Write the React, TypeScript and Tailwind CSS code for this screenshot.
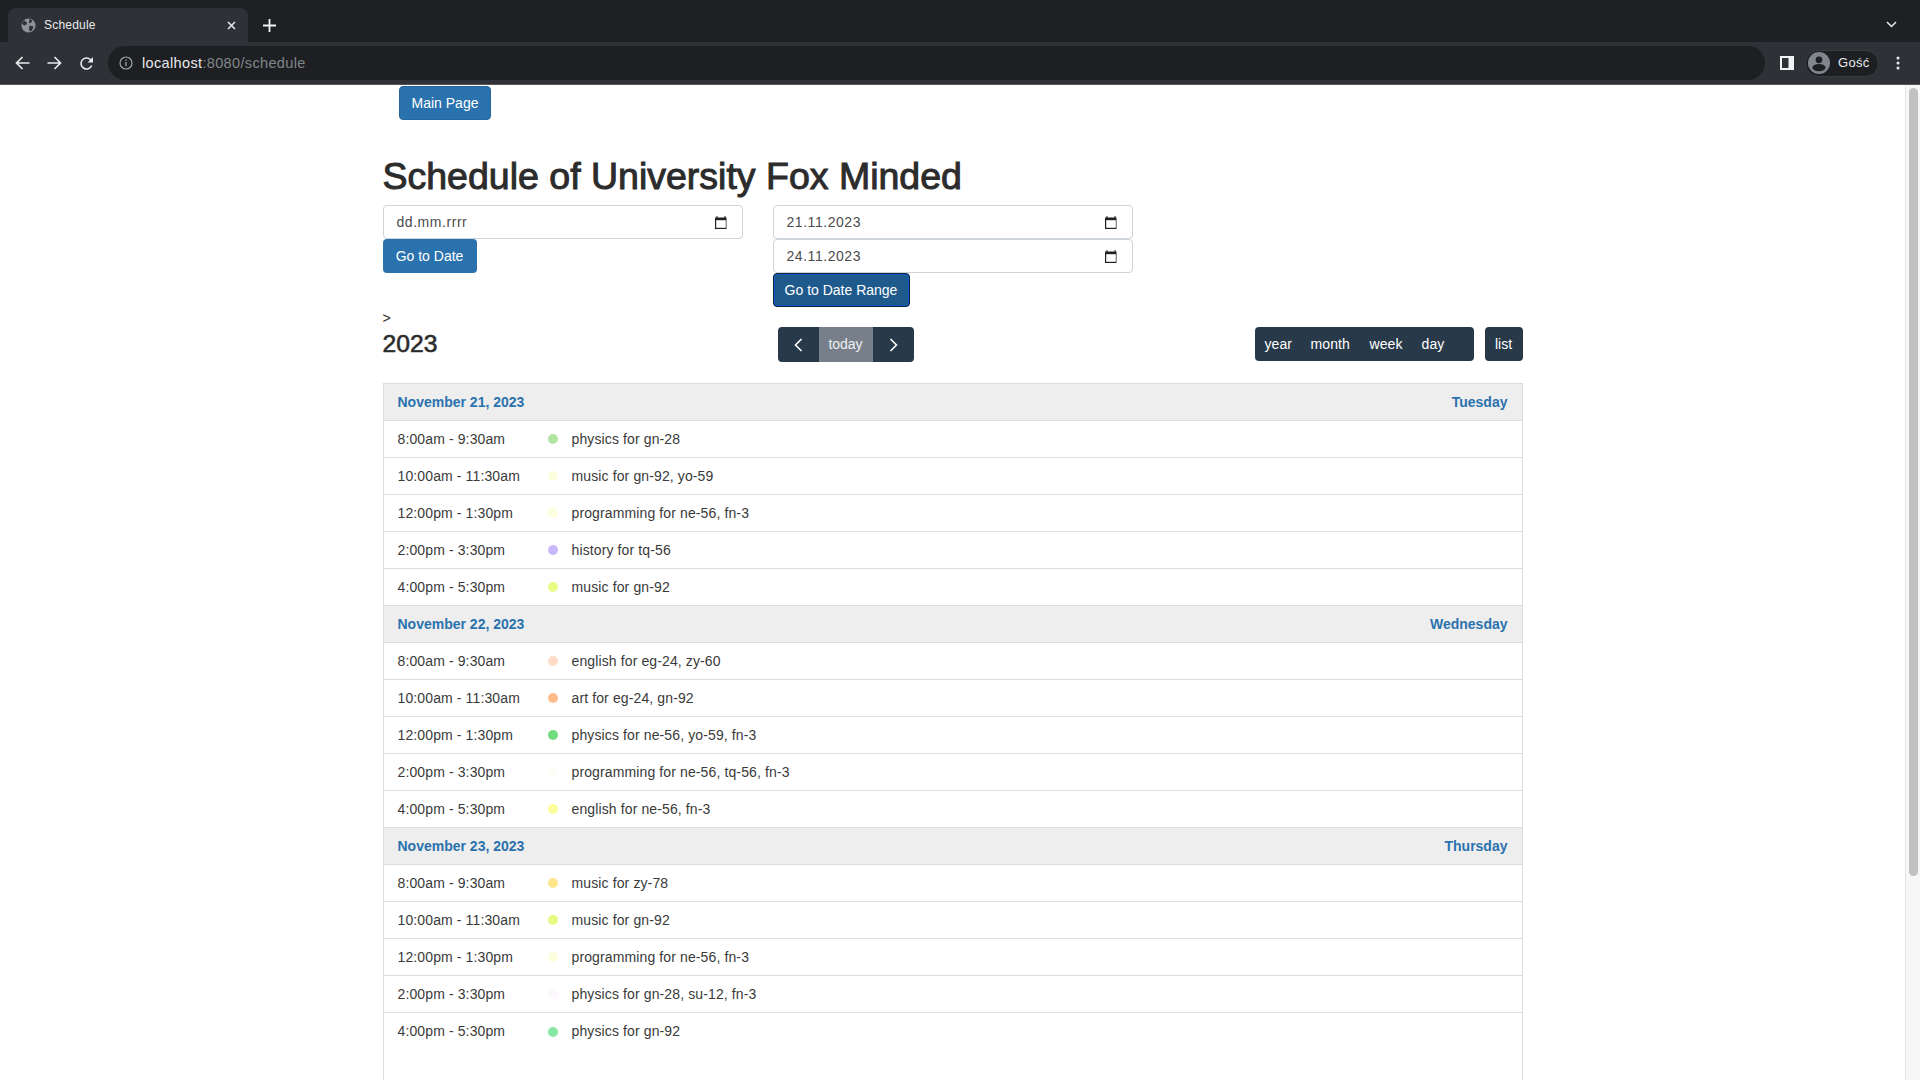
import React from 'react';

interface Row {
  time: string;
  color: string;
  title: string;
}

interface Day {
  date: string;
  weekday: string;
  rows: Row[];
}

const days: Day[] = [
  {
    date: 'November 21, 2023',
    weekday: 'Tuesday',
    rows: [
      { time: '8:00am - 9:30am', color: 'bg-[#b2e4a3]', title: 'physics for gn-28' },
      { time: '10:00am - 11:30am', color: 'bg-[#fdfedd]', title: 'music for gn-92, yo-59' },
      { time: '12:00pm - 1:30pm', color: 'bg-[#fdfedd]', title: 'programming for ne-56, fn-3' },
      { time: '2:00pm - 3:30pm', color: 'bg-[#c8b8fb]', title: 'history for tq-56' },
      { time: '4:00pm - 5:30pm', color: 'bg-[#e9fb85]', title: 'music for gn-92' },
    ],
  },
  {
    date: 'November 22, 2023',
    weekday: 'Wednesday',
    rows: [
      { time: '8:00am - 9:30am', color: 'bg-[#fddcc8]', title: 'english for eg-24, zy-60' },
      { time: '10:00am - 11:30am', color: 'bg-[#fdbb8a]', title: 'art for eg-24, gn-92' },
      { time: '12:00pm - 1:30pm', color: 'bg-[#72dc7e]', title: 'physics for ne-56, yo-59, fn-3' },
      { time: '2:00pm - 3:30pm', color: 'bg-[#fefef8]', title: 'programming for ne-56, tq-56, fn-3' },
      { time: '4:00pm - 5:30pm', color: 'bg-[#fdfb9a]', title: 'english for ne-56, fn-3' },
    ],
  },
  {
    date: 'November 23, 2023',
    weekday: 'Thursday',
    rows: [
      { time: '8:00am - 9:30am', color: 'bg-[#fde58a]', title: 'music for zy-78' },
      { time: '10:00am - 11:30am', color: 'bg-[#e6fb80]', title: 'music for gn-92' },
      { time: '12:00pm - 1:30pm', color: 'bg-[#fdfedd]', title: 'programming for ne-56, fn-3' },
      { time: '2:00pm - 3:30pm', color: 'bg-[#fcf8fe]', title: 'physics for gn-28, su-12, fn-3' },
      { time: '4:00pm - 5:30pm', color: 'bg-[#86e8a4]', title: 'physics for gn-92' },
    ],
  },
];

const CalendarIcon = () => (
  <svg width="12" height="13" viewBox="0 0 12 13" className="shrink-0">
    <path d="M2.5 0v1.5h7V0h1v1.5h1V13H0V1.5h1.5V0z" fill="#1f1f1f" />
    <rect x="1.2" y="4.2" width="9.6" height="7.6" fill="#fff" />
  </svg>
);

const DateField = ({ value }: { value: string }) => (
  <div className="h-[34px] flex items-center justify-between pl-[13px] pr-[15px] bg-white border border-[#ced4da] rounded-[4px]">
    <span className="text-[14px] tracking-[0.55px] text-[#4c4c4c]">{value}</span>
    <CalendarIcon />
  </div>
);

const BrowserChrome = () => (
  <div className="shrink-0 font-['Liberation_Sans',sans-serif]">
    <div className="h-[42px] bg-[#1f2023] flex items-end pl-[8px] pr-[23px]">
      <div className="w-[240px] h-[34px] bg-[#2f3136] rounded-t-[8px] flex items-center pl-[13px] pr-[13px]">
        <svg width="15" height="15" viewBox="0 0 16 16" className="shrink-0">
          <circle cx="8" cy="8" r="7.5" fill="#8f9296" />
          <path d="M3 2.5 6.5 5 6 7 3.5 8 1 6zM9 1l3 1.5-1 2.5-2.5.5zM9 8l4.5 1-2 4.5-2 1-1-3z" fill="#2f3136" />
        </svg>
        <span className="ml-[8px] text-[12px] text-[#e8eaed] tracking-[0.2px]">Schedule</span>
        <svg width="9" height="9" viewBox="0 0 9 9" className="ml-auto mr-[-1px]">
          <path d="M1 1l7 7M8 1L1 8" stroke="#e8eaed" strokeWidth="1.5" />
        </svg>
      </div>
      <svg width="13" height="13" viewBox="0 0 13 13" className="ml-[15px] mb-[10px]">
        <path d="M6.5 0v13M0 6.5h13" stroke="#f1f3f4" strokeWidth="1.8" />
      </svg>
      <svg width="11" height="7" viewBox="0 0 11 7" className="ml-auto mb-[14px]">
        <path d="M1 1l4.5 4.5L10 1" stroke="#e8eaed" strokeWidth="1.5" fill="none" />
      </svg>
    </div>
    <div className="h-[43px] bg-[#2f3136] border-b border-[#55565a] flex items-start pt-[4px]">
      <div className="w-[108px] h-[34px] flex items-center pl-[15px] gap-[17px] shrink-0">
        <svg width="15" height="14" viewBox="0 0 15 14">
          <path d="M14.5 7H2M7.5 1 1.5 7l6 6" stroke="#e8eaed" strokeWidth="1.7" fill="none" />
        </svg>
        <svg width="15" height="14" viewBox="0 0 15 14">
          <path d="M.5 7H13M7.5 1l6 6-6 6" stroke="#e8eaed" strokeWidth="1.7" fill="none" />
        </svg>
        <svg width="15" height="15" viewBox="0 0 15 15">
          <path d="M12.6 9.5A5.5 5.5 0 1 1 11.4 3.6L13 5.2" stroke="#e8eaed" strokeWidth="1.6" fill="none" />
          <path d="M14 1v5.5H8.5z" fill="#e8eaed" />
        </svg>
      </div>
      <div className="w-[1657px] h-[34px] bg-[#1e1f22] rounded-full flex items-center pl-[11px] shrink-0">
        <svg width="14" height="14" viewBox="0 0 14 14" className="shrink-0">
          <circle cx="7" cy="7" r="6" stroke="#a0a3a7" strokeWidth="1.2" fill="none" />
          <path d="M7 6v4.2M7 3.4v1.4" stroke="#a0a3a7" strokeWidth="1.3" />
        </svg>
        <span className="ml-[9px] pt-px text-[14.5px] tracking-[0.35px] text-[#e8eaed]">
          localhost<span className="text-[#80868b]">:8080/schedule</span>
        </span>
      </div>
      <div className="flex-1 h-[34px] flex items-center pl-[15px]">
        <svg width="14" height="14" viewBox="0 0 14 14" className="shrink-0">
          <path d="M0 0h14v14H0zM2 2v10h6.5V2z" fill="#f1f3f4" fillRule="evenodd" />
        </svg>
        <div className="ml-[11px] w-[74px] h-[27px] rounded-full bg-[#1e1f22] border border-[#3a3b3f] flex items-center pl-[2px]">
          <svg width="22" height="22" viewBox="0 0 22 22" className="shrink-0">
            <circle cx="11" cy="11" r="11" fill="#80868b" />
            <circle cx="11" cy="7.8" r="3.4" fill="#1e1f22" />
            <ellipse cx="11" cy="15.6" rx="6.6" ry="3.6" fill="#1e1f22" />
          </svg>
          <span className="ml-[8px] text-[13px] tracking-[0.3px] text-[#e8eaed]">Gość</span>
        </div>
        <svg width="4" height="14" viewBox="0 0 4 14" className="ml-[17px]">
          <circle cx="2" cy="2" r="1.5" fill="#e8eaed" />
          <circle cx="2" cy="7" r="1.5" fill="#e8eaed" />
          <circle cx="2" cy="12" r="1.5" fill="#e8eaed" />
        </svg>
      </div>
    </div>
  </div>
);

const ScheduleList = () => (
  <div className="border-x border-t border-[#ddd] flex-1">
    {days.map((day, d) => (
      <div key={day.date}>
        <div className="h-[37px] bg-[#eee] border-b border-[#ddd] flex items-center justify-between px-[14px] text-[14px] font-bold text-[#2a72ad]">
          <span>{day.date}</span>
          <span>{day.weekday}</span>
        </div>
        {day.rows.map((row, i) => (
          <div
            key={row.time}
            className={`h-[37px] flex items-center text-[14px] tracking-[0.12px] text-[#3a3a3a] ${
              d === days.length - 1 && i === day.rows.length - 1 ? '' : 'border-b border-[#ddd]'
            }`}
          >
            <span className="w-[164px] pl-[14px] shrink-0">{row.time}</span>
            <span className={`w-[10px] h-[10px] rounded-full shrink-0 ${row.color}`} />
            <span className="ml-[14px]">{row.title}</span>
          </div>
        ))}
      </div>
    ))}
  </div>
);

export default function App() {
  return (
    <div className="h-screen overflow-hidden flex flex-col bg-white font-['Liberation_Sans',sans-serif] text-[#2c2c2c]">
      <BrowserChrome />
      <div className="flex-1 min-h-0 flex">
        <main className="flex-1 min-w-0 flex flex-col">
          <div className="w-[1140px] mx-auto flex-1 flex flex-col">
            <button className="ml-[16.5px] mt-px w-[92px] h-[34px] rounded-[4px] bg-[#2a72ad] border border-[#26689d] text-white text-[14px]">
              Main Page
            </button>
            <h1 className="mt-[34px] h-[51px] text-[37.5px] leading-[44px] font-normal text-[#2c2c2c] [-webkit-text-stroke:1px_#2c2c2c]">
              Schedule of University Fox Minded
            </h1>
            <div className="flex gap-[30px] h-[102px]">
              <div className="w-[360px]">
                <DateField value="dd.mm.rrrr" />
                <button className="w-[94px] h-[34px] rounded-[4px] bg-[#2a72ad] text-white text-[14px]">Go to Date</button>
              </div>
              <div className="w-[360px]">
                <DateField value="21.11.2023" />
                <DateField value="24.11.2023" />
                <button className="w-[137px] h-[34px] rounded-[4px] bg-[#1f5a8d] text-white text-[14px] border border-[#14233a] shadow-[inset_0_0_0_1px_#0d5bc4]">
                  Go to Date Range
                </button>
              </div>
            </div>
            <div className="flex items-start mt-[4px] h-[72px]">
              <div className="w-[395px] shrink-0">
                <div className="text-[14px] leading-[14px]">&gt;</div>
                <div className="text-[24.7px] leading-[30px] mt-[4px] [-webkit-text-stroke:0.6px_#2c2c2c]">2023</div>
              </div>
              <div className="mt-[16px] w-[136px] h-[35px] flex rounded-[4px] overflow-hidden text-white text-[14px] shrink-0">
                <div className="w-[41px] bg-[#283a4a] flex items-center justify-center">
                  <svg width="9" height="14" viewBox="0 0 9 14">
                    <path d="M7.5 1 1.5 7l6 6" stroke="#fff" strokeWidth="1.6" fill="none" />
                  </svg>
                </div>
                <div className="w-[54px] bg-[#77808a] flex items-center justify-center text-[#eef0f2]">today</div>
                <div className="w-[41px] bg-[#283a4a] flex items-center justify-center">
                  <svg width="9" height="14" viewBox="0 0 9 14">
                    <path d="M1.5 1l6 6-6 6" stroke="#fff" strokeWidth="1.6" fill="none" />
                  </svg>
                </div>
              </div>
              <div className="mt-[16px] ml-[341px] w-[219px] h-[34px] bg-[#283a4a] rounded-[4px] flex items-center pl-[10px] text-white text-[14px] tracking-[0.1px] shrink-0">
                <span className="w-[46px]">year</span>
                <span className="w-[59px]">month</span>
                <span className="w-[52px]">week</span>
                <span>day</span>
              </div>
              <div className="mt-[16px] ml-[11px] w-[38px] h-[34px] bg-[#283a4a] rounded-[4px] flex items-center justify-center text-white text-[14px] shrink-0">
                list
              </div>
            </div>
            <ScheduleList />
          </div>
        </main>
        <div className="w-[15px] shrink-0 bg-[#f7f7f7] border-l border-[#e5e5e5] pl-[3px] pr-[2px] pt-[3px]">
          <div className="h-[788px] bg-[#c1c1c1] rounded-full" />
        </div>
      </div>
    </div>
  );
}
